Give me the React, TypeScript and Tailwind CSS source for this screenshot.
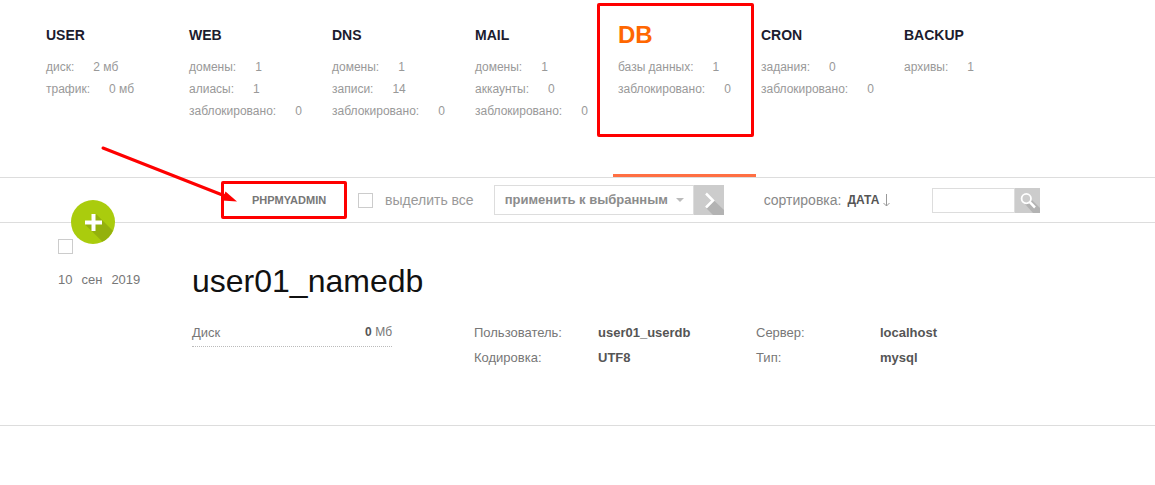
import React from 'react';

type Stat = { label: string; value: string };
type Section = { title: string; active?: boolean; stats: Stat[] };

const sections: Section[] = [
    {
        title: 'USER',
        stats: [
            { label: 'диск:', value: '2 мб' },
            { label: 'трафик:', value: '0 мб' },
        ],
    },
    {
        title: 'WEB',
        stats: [
            { label: 'домены:', value: '1' },
            { label: 'алиасы:', value: '1' },
            { label: 'заблокировано:', value: '0' },
        ],
    },
    {
        title: 'DNS',
        stats: [
            { label: 'домены:', value: '1' },
            { label: 'записи:', value: '14' },
            { label: 'заблокировано:', value: '0' },
        ],
    },
    {
        title: 'MAIL',
        stats: [
            { label: 'домены:', value: '1' },
            { label: 'аккаунты:', value: '0' },
            { label: 'заблокировано:', value: '0' },
        ],
    },
    {
        title: 'DB',
        active: true,
        stats: [
            { label: 'базы данных:', value: '1' },
            { label: 'заблокировано:', value: '0' },
        ],
    },
    {
        title: 'CRON',
        stats: [
            { label: 'задания:', value: '0' },
            { label: 'заблокировано:', value: '0' },
        ],
    },
    { title: 'BACKUP', stats: [{ label: 'архивы:', value: '1' }] },
];

const checkboxClass =
    'block size-[15px] shrink-0 appearance-none border border-[#ccc] bg-white checked:bg-[#aacc0d]';

const Nav = () => (
    <nav className="border-b border-[#ddd] pl-[41px]">
        <ul className="flex">
            {sections.map(({ title, active, stats }) => (
                <li
                    key={title}
                    className={`relative w-[143px] shrink-0 border-b-3 ${active ? 'border-[#ff6f43]' : 'border-transparent'}`}
                >
                    <a href={`#${title.toLowerCase()}`} className="block h-[174px] px-[5px] pt-6 whitespace-nowrap">
                        <div
                            className={`font-bold ${active ? 'text-2xl/[22px] text-[#ff6701]' : 'text-sm/[22px] text-[#1c1c2e]'}`}
                        >
                            {title}
                        </div>
                        <div className="mt-[10px] text-xs/[22px] text-[#999]">
                            {stats.map((stat) => (
                                <div key={stat.label} className="flex gap-[19px]">
                                    <span>{stat.label}</span>
                                    <span>{stat.value}</span>
                                </div>
                            ))}
                        </div>
                    </a>
                    {active && (
                        <div className="pointer-events-none absolute top-[3px] -left-4 h-[134px] w-[157px] rounded-xs border-3 border-[#fe0000]" />
                    )}
                </li>
            ))}
        </ul>
    </nav>
);

const Toolbar = () => (
    <div className="relative flex h-[45px] items-center border-b border-[#ddd] pl-[71px]">
        <button type="button" aria-label="Добавить" className="relative top-[22px] size-11 shrink-0">
            <svg viewBox="0 0 44 44" className="size-11">
                <circle cx="22" cy="22" r="22" fill="#aacc0d" />
                <path d="M25 14 L41.8 30.800 A22 22 0 0 1 31.500 41.800 L14 24.500 L20 20Z" fill="#94b10d" />
                <path d="M22.500 14v17M14 22.500h17" stroke="#fff" strokeWidth="4" />
            </svg>
        </button>
        <div className="relative ml-[106px] flex h-[38px] w-[126px] shrink-0 items-center rounded-xs border-3 border-[#fe0000] pl-7">
            <a href="#phpmyadmin" className="text-[11px] font-bold text-[#777]">
                PHPMYADMIN
            </a>
            <svg viewBox="0 0 140 60" className="pointer-events-none absolute -top-[39px] -left-[125px] h-[60px] w-[140px]">
                <path d="M4 3 L126 51" stroke="#fe0000" strokeWidth="3" strokeLinecap="round" />
                <path d="M126.500 46.500 L138 56.500 L123 55.500Z" fill="#fe0000" />
            </svg>
        </div>
        <label className="ml-[11px] flex shrink-0 items-center gap-3 text-sm text-[#999]">
            <input type="checkbox" className={checkboxClass} />
            выделить все
        </label>
        <form className="ml-5 flex shrink-0">
            <div className="relative">
                <select
                    aria-label="Действие"
                    className="h-[30px] w-[200px] appearance-none border border-[#ddd] bg-white pl-[10px] text-[13px] font-bold text-[#8c8c8c]"
                >
                    <option>применить к выбранным</option>
                </select>
                <svg viewBox="0 0 8 4" className="pointer-events-none absolute top-[13px] right-[10px] h-1 w-2">
                    <path d="M0 0h8L4 4Z" fill="#bbb" />
                </svg>
            </div>
            <button type="button" aria-label="Применить" className="size-[30px]">
                <svg viewBox="0 0 30 30" className="size-[30px]">
                    <path d="M0 0h30v30H0Z" fill="#ccc" />
                    <path d="M20 15.500 L30 25v5H19L12 23Z" fill="#b3b3b3" />
                    <path d="M12 8.500l7 7-7 7" fill="none" stroke="#fff" strokeWidth="2.500" />
                </svg>
            </button>
        </form>
        <div className="ml-10 flex w-[168px] shrink-0 items-center text-sm text-[#888]">
            сортировка:
            <button type="button" className="ml-[6px] flex items-center gap-1 text-xs font-bold text-[#555]">
                ДАТА
                <svg viewBox="0 0 8 14" className="h-[14px] w-2">
                    <path d="M3.500 1v12M.5 10l3 3 3-3" fill="none" stroke="#999" strokeWidth="1" />
                </svg>
            </button>
        </div>
        <form className="flex shrink-0">
            <input
                type="text"
                aria-label="Поиск"
                className="h-[25px] w-[83px] border border-[#ddd] bg-white px-1 text-sm text-[#555] outline-none"
            />
            <button type="button" aria-label="Найти" className="size-[25px]">
                <svg viewBox="0 0 25 25" className="size-[25px]">
                    <path d="M0 0h25v25H0Z" fill="#ccc" />
                    <path d="M17 12 L25 20v5H18L10 16Z" fill="#b3b3b3" />
                    <circle cx="11.300" cy="10.600" r="4.700" fill="#ccc" stroke="#fff" strokeWidth="1.800" />
                    <path d="M14.800 14.200l5.200 5.300" stroke="#fff" strokeWidth="2.500" />
                </svg>
            </button>
        </form>
    </div>
);

const details = [
    [
        { label: 'Пользователь:', value: 'user01_userdb' },
        { label: 'Кодировка:', value: 'UTF8' },
    ],
    [
        { label: 'Сервер:', value: 'localhost' },
        { label: 'Тип:', value: 'mysql' },
    ],
];

const DatabaseRow = () => (
    <div className="flex border-b border-[#ddd] pt-4 pb-[55px] pl-[58px]">
        <div className="w-[134px] shrink-0">
            <input type="checkbox" aria-label="user01_namedb" className={checkboxClass} />
            <time dateTime="2019-09-10" className="mt-4 flex gap-[9px] text-[13px]/5 text-[#777]">
                <span>10</span> <span>сен</span> <span>2019</span>
            </time>
        </div>
        <div className="pt-5">
            <h1 className="text-[32px]/[44px] text-[#111]">user01_namedb</h1>
            <div className="mt-[17px] flex text-[13px]/[25px] text-[#777]">
                <div className="mr-[82px] flex h-[27px] w-[200px] shrink-0 justify-between border-b border-dotted border-[#bbb]">
                    <span>Диск</span>
                    <span className="text-xs/[25px]">
                        <b className="text-[#555]">0</b> Мб
                    </span>
                </div>
                {details.map((group, i) => (
                    <dl key={i} className="grid w-[282px] shrink-0 grid-cols-[124px_1fr]">
                        {group.map(({ label, value }) => (
                            <React.Fragment key={label}>
                                <dt>{label}</dt>
                                <dd className="font-bold text-[#555]">{value}</dd>
                            </React.Fragment>
                        ))}
                    </dl>
                ))}
            </div>
        </div>
    </div>
);

const App = () => {
    return (
        <div className="min-h-screen overflow-x-hidden bg-white font-['Liberation_Sans',Arial,sans-serif]">
            <Nav />
            <Toolbar />
            <DatabaseRow />
        </div>
    );
};

export default App;
